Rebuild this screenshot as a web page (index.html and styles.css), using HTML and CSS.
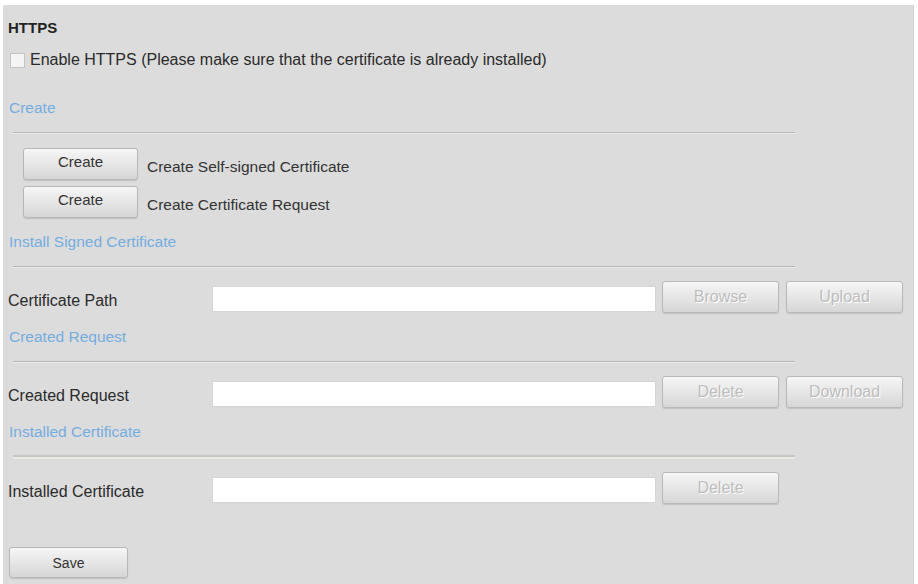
FILE: index.html
```html
<!DOCTYPE html>
<html lang="en">
<head>
    <meta charset="UTF-8">
    <title>HTTPS</title>
    <link rel="stylesheet" href="styles.css">
</head>
<body>

<div class="panel">
    <div class="title">HTTPS</div>

    <label class="check-row">
        <span class="checkbox"></span>
        Enable HTTPS (Please make sure that the certificate is already installed)
    </label>

    <div class="section-title first">Create</div>
    <div class="divider"></div>

    <div class="create-row">
        <button class="btn create-btn">Create</button>
        <span>Create Self-signed Certificate</span>
    </div>
    <div class="create-row second">
        <button class="btn create-btn">Create</button>
        <span>Create Certificate Request</span>
    </div>

    <div class="section-title">Install Signed Certificate</div>
    <div class="divider"></div>

    <div class="field-row">
        <span class="field-label">Certificate Path</span>
        <input type="text" class="field-input">
        <button class="btn small-btn" disabled>Browse</button>
        <button class="btn small-btn" disabled>Upload</button>
    </div>

    <div class="section-title">Created Request</div>
    <div class="divider"></div>

    <div class="field-row">
        <span class="field-label">Created Request</span>
        <input type="text" class="field-input">
        <button class="btn small-btn" disabled>Delete</button>
        <button class="btn small-btn" disabled>Download</button>
    </div>

    <div class="section-title">Installed Certificate</div>
    <div class="divider double"></div>

    <div class="field-row last">
        <span class="field-label">Installed Certificate</span>
        <input type="text" class="field-input">
        <button class="btn small-btn" disabled>Delete</button>
    </div>

    <button class="btn save-btn">Save</button>
</div>

</body>
</html>
```

FILE: styles.css
```css
* {
    box-sizing: border-box;
}

body {
    margin: 0;
    padding: 0;
    background-color: #ffffff;
    font-family: "Liberation Sans", Arial, sans-serif;
    color: #333333;
}

.panel {
    margin: 5px 0 0 3px;
    width: 911px;
    height: 579px;
    padding: 14px 0 0 5px;
    background-color: #dcdcdc;
    border-right: 1px solid #d0d0d0;
}

.title {
    height: 18px;
    font-size: 15px;
    font-weight: bold;
    line-height: 18px;
    color: #222222;
}

.check-row {
    display: flex;
    align-items: center;
    gap: 5px;
    height: 18px;
    margin-top: 14px;
    padding-left: 2px;
    font-size: 16px;
    line-height: 18px;
    color: #2a2a2a;
}

.checkbox {
    display: inline-block;
    width: 15px;
    height: 15px;
    background-color: #f4f4f4;
    border: 1px solid #c4c4c4;
}

.section-title {
    height: 18px;
    margin-top: 15px;
    padding-left: 1px;
    font-size: 15.5px;
    line-height: 18px;
    color: #74ade0;
}

.section-title.first {
    margin-top: 30px;
}

.divider {
    width: 782px;
    height: 2px;
    margin: 15px 0 0 5px;
    border-top: 1px solid #b6b6b6;
    border-bottom: 1px solid #ececec;
}

.divider.double {
    height: 4px;
    margin-top: 14px;
    border-top: 2px solid #c6c6c2;
    border-bottom: 2px solid #ebebe6;
}

.btn {
    font-family: "Liberation Sans", Arial, sans-serif;
    font-size: 15px;
    color: #333333;
    background: linear-gradient(#f6f6f6, #d6d6d6);
    border: 1px solid #b8b8b8;
    border-radius: 3px;
    box-shadow: 0 1px 1px rgba(0, 0, 0, 0.12);
    padding: 0;
}

.btn:disabled {
    color: #bdbdbd;
    text-shadow: 1px 1px 0 #ffffff;
}

.create-row {
    display: flex;
    align-items: center;
    gap: 9px;
    height: 32px;
    margin: 14px 0 0 15px;
    font-size: 15.5px;
    color: #333333;
}

.create-row.second {
    margin-top: 6px;
}

.create-btn {
    width: 115px;
    height: 32px;
    padding-bottom: 5px;
}

.create-row span {
    padding-top: 6px;
}

.field-row {
    display: flex;
    align-items: center;
    height: 33px;
    margin-top: 11px;
}

.divider + .field-row {
    margin-top: 12px;
}

.field-row.last {
    height: 31px;
    margin-top: 13px;
}

.field-label {
    width: 204px;
    padding-top: 9px;
    font-size: 16px;
    color: #2a2a2a;
}

.field-input {
    width: 444px;
    height: 26px;
    margin: 5px 6px 0 0;
    border: 1px solid #d4d4d4;
    background-color: #ffffff;
}

.small-btn {
    width: 117px;
    height: 32px;
    margin-right: 7px;
    font-size: 16px;
}

.save-btn {
    display: block;
    width: 119px;
    height: 31px;
    margin: 44px 0 0 1px;
    font-size: 14px;
}
```
